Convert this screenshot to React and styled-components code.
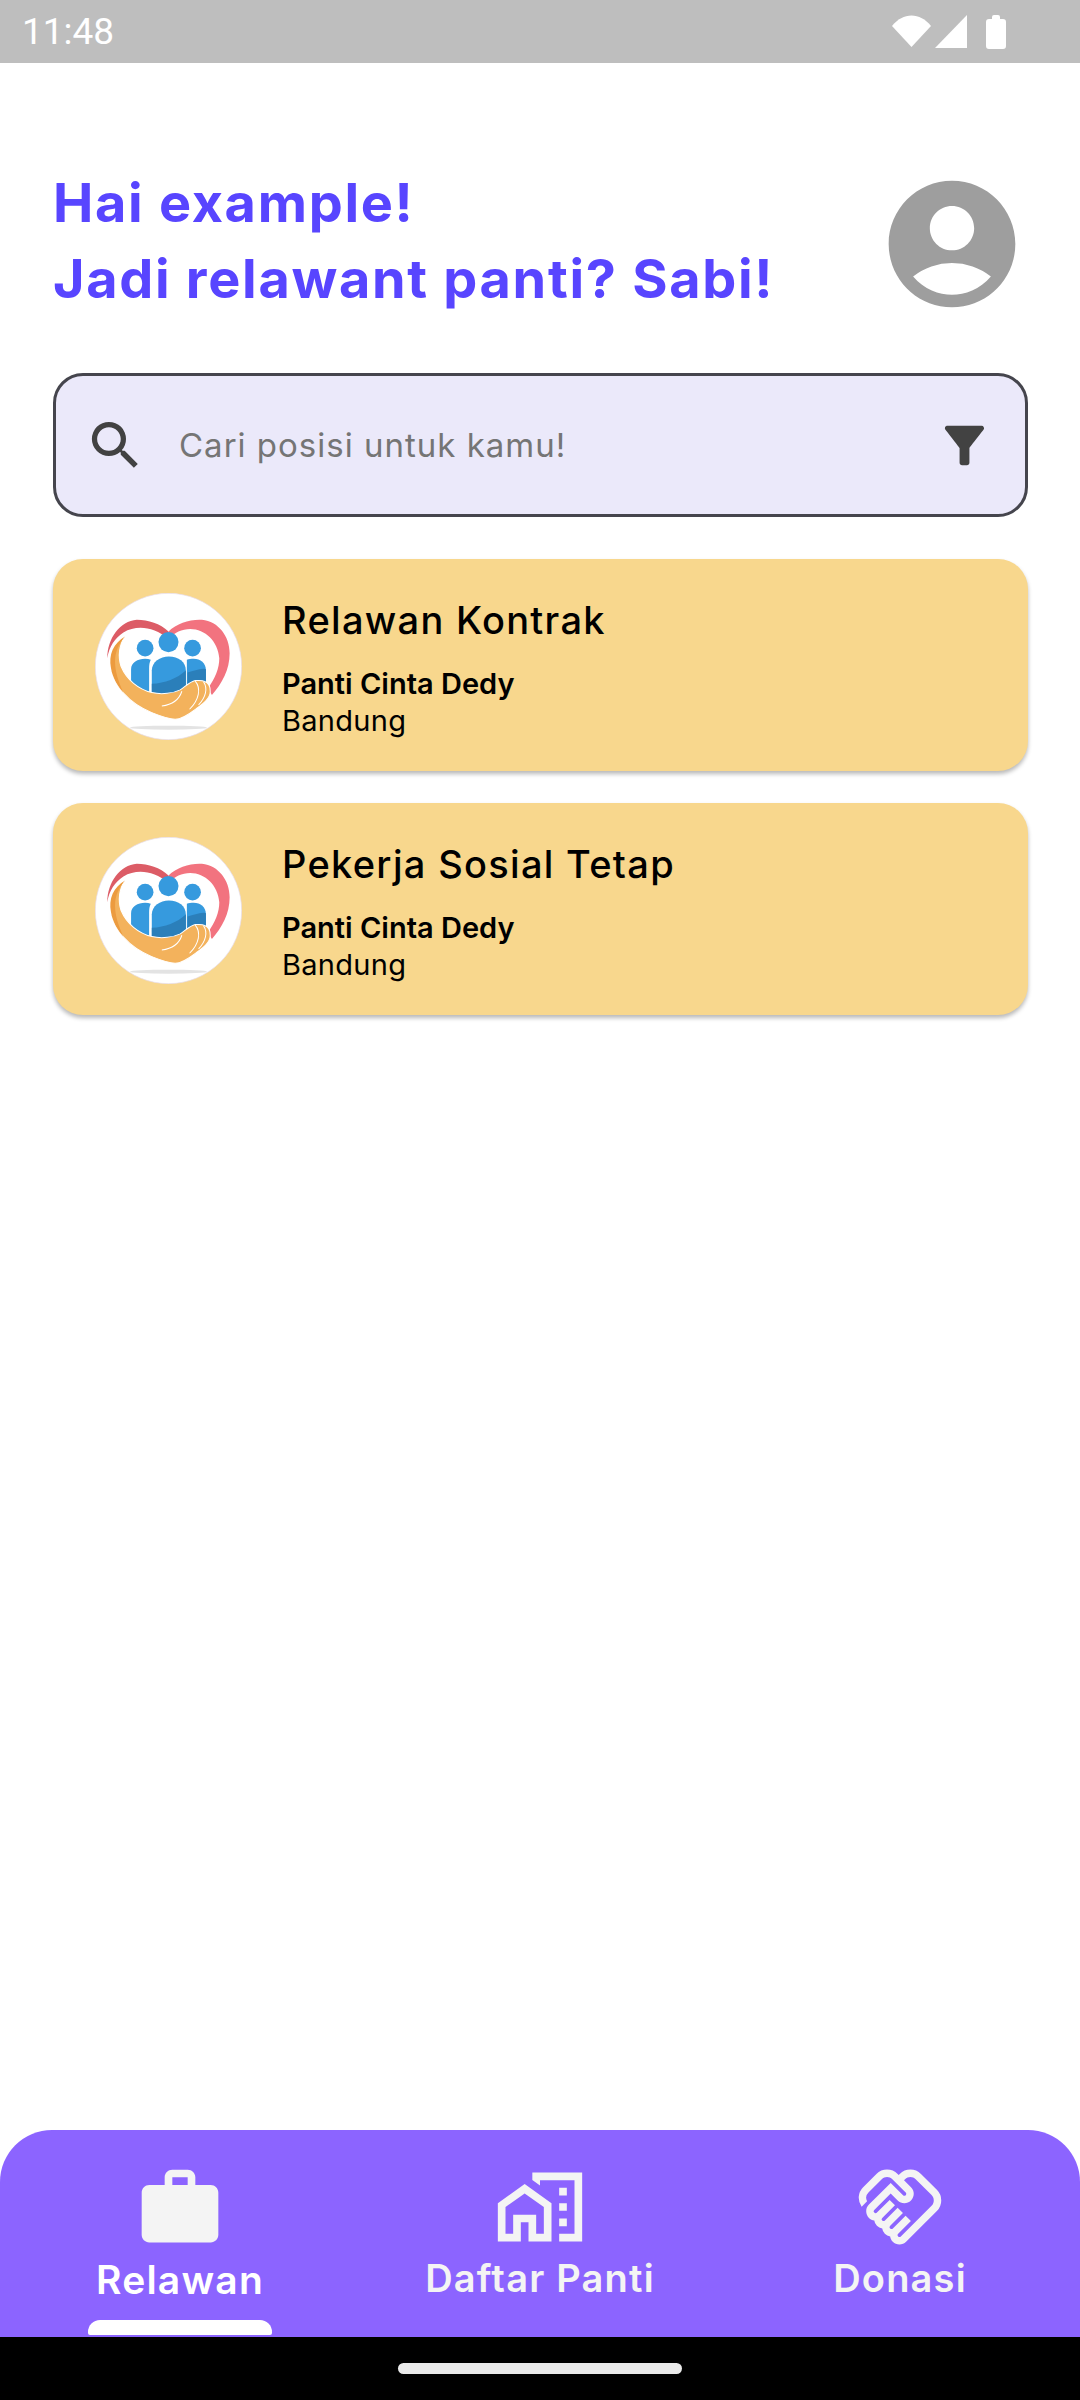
import React from 'react'
import styled, { createGlobalStyle } from 'styled-components'
import { MdSearch, MdFilterAlt, MdAccountCircle, MdWork, MdOutlineMapsHomeWork, MdOutlineHandshake } from 'react-icons/md'

const GlobalStyle = createGlobalStyle`
    html, body {
        margin: 0;
        padding: 0;
        background: #fff;
    }
    * {
        box-sizing: border-box;
    }
`

const Page = styled.div`
    display: flex;
    flex-direction: column;
    width: 1080px;
    height: 2400px;
    overflow: hidden;
    background: #fff;
    font-family: Inter, "Liberation Sans", sans-serif;
`

const StatusBar = styled.div`
    display: flex;
    align-items: center;
    justify-content: space-between;
    flex: none;
    height: 63px;
    padding: 0 74px 0 22px;
    background: #bebebe;
    color: #fff;
    font-family: Roboto, sans-serif;
    font-size: 37px;
`

const Content = styled.main`
    display: flex;
    flex-direction: column;
    flex: 1;
    padding: 102px 52px 0 53px;
`

const Header = styled.header`
    display: flex;
    align-items: flex-start;
    justify-content: space-between;
    height: 152px;
    margin-bottom: 56px;
`

const Greeting = styled.h1`
    margin: 0;
    color: #5845ff;
    font-size: 54px;
    font-weight: 700;
    line-height: 76px;
    letter-spacing: 1.7px;
`

const Avatar = styled(MdAccountCircle)`
    display: block;
    margin-top: 3px;
    color: #9e9e9e;
`

const SearchBar = styled.div`
    display: flex;
    align-items: center;
    height: 144px;
    padding: 0 31px 0 28px;
    margin-bottom: 42px;
    border: 3px solid #45454d;
    border-radius: 30px;
    background: #ebe9fa;
    color: #424242;
`

const Placeholder = styled.span`
    flex: 1;
    margin-left: 32px;
    color: #757575;
    font-family: Inter, sans-serif;
    font-size: 33px;
    letter-spacing: 1px;
`

const CardList = styled.div`
    display: flex;
    flex-direction: column;
    gap: 32px;
`

const Card = styled.article`
    display: flex;
    align-items: center;
    gap: 40px;
    height: 212px;
    padding-left: 42px;
    border-radius: 30px;
    background: #f8d78d;
    box-shadow: 0 3px 4px rgba(0, 0, 0, 0.28);
`

const LogoCircle = styled.svg`
    flex: none;
    width: 147px;
    height: 147px;
    margin-top: 3px;
`

const CardText = styled.div`
    display: flex;
    flex-direction: column;
    padding-top: 6px;
    color: #000;
`

const CardTitle = styled.h2`
    margin: 0 0 22px;
    font-size: 38px;
    font-weight: 500;
    line-height: 46px;
    letter-spacing: 1.3px;
`

const CardOrg = styled.div`
    font-size: 29px;
    font-weight: 600;
    line-height: 37px;
`

const CardCity = styled.div`
    font-size: 29px;
    font-weight: 400;
    line-height: 37px;
    letter-spacing: 0.3px;
`

const BottomNav = styled.nav`
    display: grid;
    grid-template-columns: repeat(3, 1fr);
    flex: none;
    height: 207px;
    border-radius: 52px 52px 0 0;
    background: #8c64ff;
`

const NavItem = styled.div`
    position: relative;
    display: flex;
    flex-direction: column;
    align-items: center;
    padding-top: ${props => props.$top};
    color: #f4f4f4;
`

const NavLabel = styled.span`
    margin-top: ${props => props.$gap};
    color: ${props => props.$active ? '#fff' : '#f4f4f4'};
    font-size: ${props => props.$active ? '39px' : '38px'};
    font-weight: 600;
    line-height: 44px;
    letter-spacing: 1.2px;
`

const Indicator = styled.div`
    position: absolute;
    left: 88px;
    bottom: 2px;
    width: 184px;
    height: 15px;
    border-radius: 12px 12px 2px 2px;
    background: #fff;
`

const SystemBar = styled.div`
    display: flex;
    align-items: center;
    justify-content: center;
    flex: none;
    height: 63px;
    background: #000;
`

const HomePill = styled.div`
    width: 284px;
    height: 11px;
    border-radius: 6px;
    background: #eaeaea;
`

function StatusIcons() {
    return (
        <svg width="114" height="34" viewBox="892 14 114 34" fill="#fff">
            <path d="M892 25 C903 11 920 11 931 25 L911.5 46 Z" />
            <path d="M967 14 V47 H935 Z" />
            <path d="M992 18 V16 Q992 14 994 14 H998 Q1000 14 1000 16 V18 H1003 Q1006 18 1006 21 V45 Q1006 48 1003 48 H989 Q986 48 986 45 V21 Q986 18 989 18 Z" />
        </svg>
    )
}

function PantiLogo() {
    return (
        <LogoCircle viewBox="0 0 440 440">
            <circle cx="220" cy="220" r="219" fill="#fff" stroke="#e6dcf0" strokeWidth="2" />
            <ellipse cx="220" cy="403" rx="115" ry="6" fill="#e3e3e3" />
            <path d="M220 115 C245 90 285 78 320 80 C370 85 403 130 403 180 C403 230 380 270 350 305 L338 285 C360 255 372 225 372 195 C368 145 330 108 285 108 C260 108 238 118 220 138 Z" fill="#f2737f" />
            <path d="M220 115 C195 92 160 80 125 80 C75 84 37 135 37 195 C42 160 60 135 85 118 C125 95 175 100 220 138 Z" fill="#dc5c66" />
            <circle cx="220" cy="147" r="30" fill="#369ade" />
            <circle cx="150" cy="165" r="25" fill="#369ade" />
            <circle cx="292" cy="165" r="25" fill="#369ade" />
            <path d="M108 290 V228 C108 208 128 197 150 197 C156 197 162 198 167 200 C163 208 162 216 162 226 V295 Z" fill="#369ade" />
            <path d="M275 200 C280 198 288 197 295 197 C316 197 332 210 332 232 V275 L275 275 Z" fill="#369ade" />
            <path d="M277 238 C297 234 315 224 332 228 V275 L277 275 Z" fill="#2b7fba" />
            <path d="M170 300 V232 C170 206 195 190 221 190 C250 190 272 206 272 232 V285 L230 305 Z" fill="#369ade" />
            <path d="M170 272 C210 270 245 256 272 232 V285 L230 305 L170 300 Z" fill="#2b7fba" />
            <path d="M90 130 C55 150 40 185 48 225 C55 275 100 330 170 358 C195 368 220 377 240 378 C262 378 285 360 305 345 C325 330 345 315 345 295 C345 280 338 268 328 265 C320 260 310 262 300 262 C285 265 270 280 255 290 C235 300 200 305 170 298 C130 288 95 260 78 220 C68 190 72 155 90 130 Z" fill="#f3b25c" stroke="#fff" strokeWidth="3" />
            <path d="M90 130 C55 150 40 185 48 225 C52 250 65 275 85 298 C70 265 60 235 60 205 C60 175 72 150 90 130 Z" fill="#ec9b3f" />
            <path d="M200 338 C225 335 250 325 260 294 M300 264 C318 285 312 320 283 348 M325 266 C338 285 332 312 310 335" fill="none" stroke="#fff" strokeWidth="3" />
        </LogoCircle>
    )
}

const jobs = [
    { title: 'Relawan Kontrak', org: 'Panti Cinta Dedy', city: 'Bandung' },
    { title: 'Pekerja Sosial Tetap', org: 'Panti Cinta Dedy', city: 'Bandung' },
]

function JobCard({ job }) {
    return (
        <Card>
            <PantiLogo />
            <CardText>
                <CardTitle>{job.title}</CardTitle>
                <CardOrg>{job.org}</CardOrg>
                <CardCity>{job.city}</CardCity>
            </CardText>
        </Card>
    )
}

export default function App() {
    return (
        <Page>
            <GlobalStyle />
            <StatusBar>
                <span>11:48</span>
                <StatusIcons />
            </StatusBar>
            <Content>
                <Header>
                    <Greeting>Hai example!<br />Jadi relawant panti? Sabi!</Greeting>
                    <Avatar size={152} />
                </Header>
                <SearchBar>
                    <MdSearch size={63} />
                    <Placeholder>Cari posisi untuk kamu!</Placeholder>
                    <MdFilterAlt size={59} />
                </SearchBar>
                <CardList>
                    {jobs.map(job => <JobCard key={job.title} job={job} />)}
                </CardList>
            </Content>
            <BottomNav>
                <NavItem $top="32px">
                    <MdWork size={92} />
                    <NavLabel $active $gap="4px">Relawan</NavLabel>
                    <Indicator />
                </NavItem>
                <NavItem $top="31px">
                    <MdOutlineMapsHomeWork size={92} />
                    <NavLabel $gap="3px">Daftar Panti</NavLabel>
                </NavItem>
                <NavItem $top="32px">
                    <MdOutlineHandshake size={90} />
                    <NavLabel $gap="4px">Donasi</NavLabel>
                </NavItem>
            </BottomNav>
            <SystemBar>
                <HomePill />
            </SystemBar>
        </Page>
    )
}
